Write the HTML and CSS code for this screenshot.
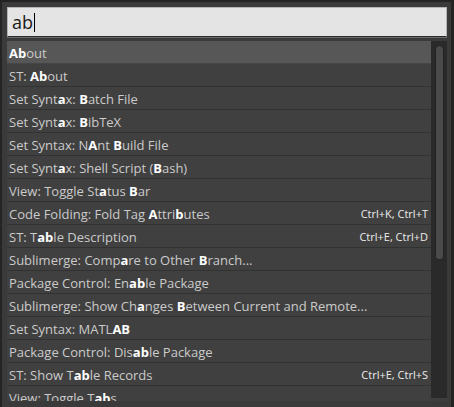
FILE: index.html
```html
<!DOCTYPE html>
<html>
<head>
<meta charset="utf-8">
<link rel="stylesheet" href="styles.css">
</head>
<body>
<div class="panel">
  <div class="input"><span class="query">ab</span><span class="caret"></span></div>
  <div class="listwrap">
    <div class="list">
      <div class="row sel"><span class="label"><b>Ab</b>out</span></div>
      <div class="row"><span class="label">ST: <b>Ab</b>out</span></div>
      <div class="row"><span class="label">Set Synt<b>a</b>x: <b>B</b>atch File</span></div>
      <div class="row"><span class="label">Set Synt<b>a</b>x: <b>B</b>ibTeX</span></div>
      <div class="row"><span class="label">Set Syntax: N<b>A</b>nt <b>B</b>uild File</span></div>
      <div class="row"><span class="label">Set Synt<b>a</b>x: Shell Script (<b>B</b>ash)</span></div>
      <div class="row"><span class="label">View: Toggle St<b>a</b>tus <b>B</b>ar</span></div>
      <div class="row"><span class="label">Code Folding: Fold Tag <b>A</b>ttri<b>b</b>utes</span><span class="key">Ctrl+K, Ctrl+T</span></div>
      <div class="row"><span class="label">ST: T<b>ab</b>le Description</span><span class="key">Ctrl+E, Ctrl+D</span></div>
      <div class="row"><span class="label">Sublimerge: Comp<b>a</b>re to Other <b>B</b>ranch...</span></div>
      <div class="row"><span class="label">Package Control: En<b>ab</b>le Package</span></div>
      <div class="row"><span class="label">Sublimerge: Show Ch<b>a</b>nges <b>B</b>etween Current and Remote...</span></div>
      <div class="row"><span class="label">Set Syntax: MATL<b>AB</b></span></div>
      <div class="row"><span class="label">Package Control: Dis<b>ab</b>le Package</span></div>
      <div class="row"><span class="label">ST: Show T<b>ab</b>le Records</span><span class="key">Ctrl+E, Ctrl+S</span></div>
      <div class="row"><span class="label">View: Toggle T<b>ab</b>s</span></div>
    </div>
    <div class="scrollbar"><div class="thumb"></div></div>
  </div>
</div>
</body>
</html>
```
FILE: styles.css
```css
html, body {
  margin: 0;
  padding: 0;
}
body {
  background: #242522;
  width: 454px;
  height: 407px;
  overflow: hidden;
  font-family: "Open Sans", "Liberation Sans", sans-serif;
}
.panel {
  margin: 2px 3px 0 2px;
  height: 405px;
  box-sizing: border-box;
  background: #3a3a3a;
  padding: 5px 4px 0 5px;
  display: flex;
  flex-direction: column;
}
.input {
  height: 30px;
  box-sizing: border-box;
  background: #e4e4e4;
  border: 1px solid #b4b4b4;
  border-bottom: 1px solid #2a2a2a;
  box-shadow: 0 1px 0 #6c6c6c;
  display: flex;
  align-items: center;
  padding-left: 4px;
}
.query {
  font-size: 18px;
  color: #1a1a1a;
  line-height: 20px;
}
.caret {
  width: 0;
  height: 19px;
  border-left: 1px solid #000;
  margin-left: 1px;
}
.listwrap {
  margin-top: 4px;
  height: 360px;
  display: flex;
  overflow: hidden;
  background: #3e3e3e;
}
.list {
  flex: 1;
  min-width: 0;
  display: flex;
  flex-direction: column;
}
.row {
  flex: none;
  height: 23px;
  box-sizing: border-box;
  border-bottom: 1px solid #323232;
  background: #404040;
  display: flex;
  align-items: center;
  justify-content: space-between;
  padding: 1px 3px 0 2px;
  font-size: 13px;
  line-height: 18px;
  color: #cbcbcb;
  white-space: nowrap;
}
.row.sel {
  background: #575757;
  border-bottom-color: #464646;
}
.row b {
  color: #ffffff;
  font-weight: 700;
}
.key {
  font-size: 11px;
  color: #ececec;
}
.scrollbar {
  width: 16px;
  height: 357px;
  background: #2a2a2a;
  box-sizing: border-box;
  padding: 4px 3px 0 4px;
}
.thumb {
  height: 215px;
  box-sizing: border-box;
  background: #4a4a4a;
  border: 1px solid #222;
  border-radius: 5px 5px 4px 4px;
}
```
